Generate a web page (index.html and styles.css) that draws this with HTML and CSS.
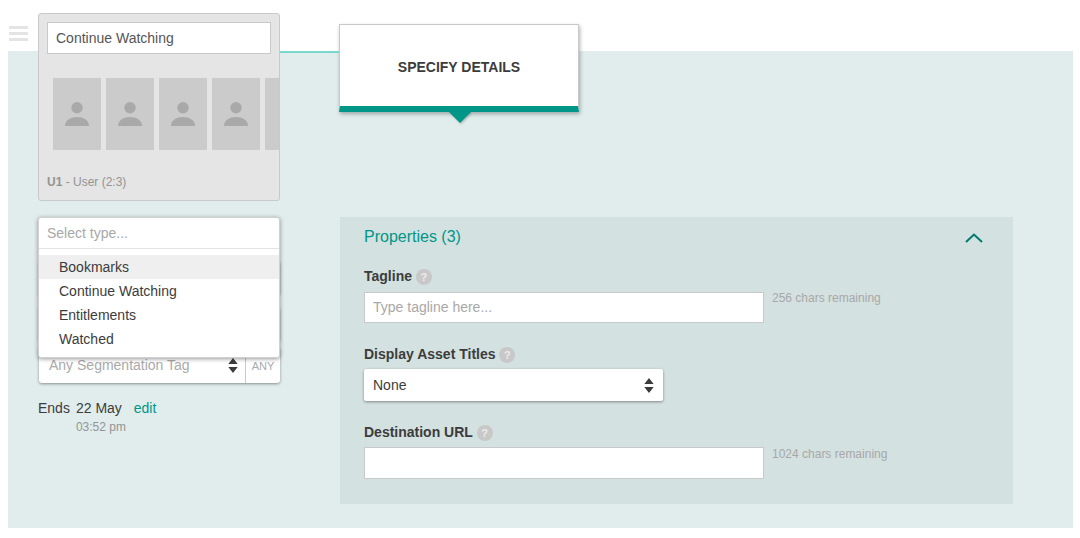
FILE: index.html
```html
<!DOCTYPE html>
<html lang="en">
<head>
<meta charset="utf-8">
<title>Specify Details</title>
<link rel="stylesheet" href="styles.css">
</head>
<body>
<header class="topbar">
  <div class="burger"><span></span><span></span><span></span></div>
</header>
<main class="stage">
  <aside class="side">
    <section class="card">
      <div class="card-title">Continue Watching</div>
      <div class="thumbs">
        <div class="thumb"><svg viewBox="0 0 24 24" class="person"><circle cx="12" cy="5.7" r="5.7"/><path d="M0 24c0-6 6-9 12-9s12 3 12 9z"/></svg></div>
        <div class="thumb"><svg viewBox="0 0 24 24" class="person"><circle cx="12" cy="5.7" r="5.7"/><path d="M0 24c0-6 6-9 12-9s12 3 12 9z"/></svg></div>
        <div class="thumb"><svg viewBox="0 0 24 24" class="person"><circle cx="12" cy="5.7" r="5.7"/><path d="M0 24c0-6 6-9 12-9s12 3 12 9z"/></svg></div>
        <div class="thumb"><svg viewBox="0 0 24 24" class="person"><circle cx="12" cy="5.7" r="5.7"/><path d="M0 24c0-6 6-9 12-9s12 3 12 9z"/></svg></div>
        <div class="thumb"></div>
      </div>
      <div class="card-caption"><b>U1</b> - User (2:3)</div>
    </section>
    <div class="filters">
      <div class="hidden-field first"></div>
      <div class="hidden-field second"></div>
      <div class="tag-select">
        <span class="tag-name">Any Segmentation Tag</span>
        <svg class="updown" viewBox="0 0 10 16"><path d="M5 0l5 6.5H0zM5 16L0 9.5h10z"/></svg>
        <span class="tag-any">ANY</span>
      </div>
      <div class="menu">
        <div class="menu-search">Select type...</div>
        <ul class="menu-list">
          <li class="active">Bookmarks</li>
          <li>Continue Watching</li>
          <li>Entitlements</li>
          <li>Watched</li>
        </ul>
      </div>
    </div>
    <div class="ends">
      <span class="ends-label">Ends</span>
      <div>
        <div>22 May <a class="edit">edit</a></div>
        <div class="ends-time">03:52 pm</div>
      </div>
    </div>
  </aside>
  <div class="content">
    <div class="tab">
      <div class="tab-label">SPECIFY DETAILS</div>
    </div>
    <section class="panel">
      <div class="panel-head">
        <h2>Properties (3)</h2>
        <svg class="chev" viewBox="0 0 18 10"><path d="M1 9l8-7.5L17 9"/></svg>
      </div>
      <div class="field tagline">
        <label>Tagline <i class="help">?</i></label>
        <div class="row">
          <div class="input placeholder">Type tagline here...</div>
          <span class="remain">256 chars remaining</span>
        </div>
      </div>
      <div class="field titles">
        <label>Display Asset Titles <i class="help">?</i></label>
        <div class="select">None<svg class="updown" viewBox="0 0 10 16"><path d="M5 0l5 6.5H0zM5 16L0 9.5h10z"/></svg></div>
      </div>
      <div class="field url">
        <label>Destination URL <i class="help">?</i></label>
        <div class="row">
          <div class="input"></div>
          <span class="remain">1024 chars remaining</span>
        </div>
      </div>
    </section>
  </div>
</main>
</body>
</html>
```
FILE: styles.css
```css
* { box-sizing: border-box; }
html, body { margin: 0; padding: 0; background: #fff; }
body {
  width: 1080px;
  height: 538px;
  padding: 0 7px 10px 8px;
  overflow: hidden;
  font-family: "Liberation Sans", Arial, sans-serif;
  font-size: 14px;
  color: #3c3c3c;
}
.topbar { height: 51px; padding: 26px 0 0 1px; }
.burger { width: 19px; display: flex; flex-direction: column; gap: 3px; }
.burger span { display: block; height: 3px; background: #e4e4e4; }
.stage {
  height: 477px;
  background: #e0edec;
  display: flex;
  padding-left: 30px;
}
.side { width: 242px; margin-top: -38px; flex: none; position: relative; }
.card {
  height: 188px;
  background: #e5e5e5;
  border: 1px solid #c9c9c9;
  border-radius: 3px;
  padding: 8px 8px 0;
  overflow: hidden;
}
.card-title {
  height: 32px;
  background: #fff;
  border: 1px solid #c9c9c9;
  padding-left: 8px;
  line-height: 30px;
  color: #555;
}
.thumbs { display: flex; gap: 5px; margin: 24px -9px 0 6px; }
.thumb {
  width: 48px;
  height: 72px;
  flex: none;
  background: #cbcbcb;
  display: flex;
  align-items: center;
  justify-content: center;
}
.person { width: 24px; height: 24px; fill: #a9a9a9; }
.card-caption { margin-top: 25px; font-size: 12px; color: #949494; }
.filters { position: relative; height: 166px; margin-top: 16px; }
.hidden-field {
  position: absolute;
  left: 1px;
  right: 0;
  height: 34px;
  background: #fff;
  border-radius: 3px;
  box-shadow: 0 1px 3px rgba(0,0,0,.35);
}
.hidden-field.first { top: 44px; }
.hidden-field.second { top: 90px; }
.tag-select {
  position: absolute;
  left: 1px;
  right: 0;
  top: 130px;
  height: 36px;
  display: flex;
  align-items: center;
  background: #fff;
  border-radius: 3px;
  box-shadow: 0 1px 3px rgba(0,0,0,.4);
  color: #aaa;
}
.tag-name { padding-left: 10px; flex: 1; }
.tag-select .updown { margin-right: 7px; }
.tag-any {
  width: 35px;
  height: 100%;
  border-left: 1px solid #c9c9c9;
  text-align: center;
  font-size: 11px;
  line-height: 38px;
}
.updown { width: 10px; height: 15px; fill: #3c3c3c; flex: none; }
.menu {
  position: absolute;
  left: 0;
  right: 0;
  top: 0;
  height: 141px;
  background: #fff;
  border: 1px solid #d0d0d0;
  border-radius: 3px;
  box-shadow: 0 1px 4px rgba(0,0,0,.4);
}
.menu-search {
  height: 31px;
  padding-left: 8px;
  line-height: 30px;
  color: #a8a8a8;
  border-bottom: 1px solid #e2e2e2;
}
.menu-list { list-style: none; margin: 6px 0 0; padding: 0; }
.menu-list li { height: 24px; line-height: 24px; padding-left: 20px; }
.menu-list li.active { background: #efefef; }
.ends { display: flex; gap: 6px; margin-top: 17px; }
.ends > div { line-height: 17px; }
.ends-label { line-height: 17px; }
.edit { color: #009688; margin-left: 8px; }
.ends-time { font-size: 12px; color: #949494; margin-top: 2px; }
.content { margin-left: 59px; flex: 1; }
.tab {
  width: 240px;
  height: 88px;
  margin-top: -27px;
  background: #fff;
  border: 1px solid #c9c9c9;
  border-bottom: 6px solid #009688;
  box-shadow: 1px 2px 4px rgba(0,0,0,.3);
  position: relative;
}
.tab::before {
  content: "";
  position: absolute;
  left: -60px;
  top: 26px;
  width: 59px;
  height: 2px;
  background: #7ad8cc;
}
.tab::after {
  content: "";
  position: absolute;
  left: 109px;
  bottom: -17px;
  border: 11px solid transparent;
  border-bottom: 0;
  border-top-color: #009688;
  filter: drop-shadow(1px 1px 1px rgba(0,0,0,.25));
}
.tab-label {
  text-align: center;
  font-weight: 700;
  font-size: 14px;
  line-height: 84px;
  padding-bottom: 2px;
}
.panel {
  width: 673px;
  height: 287px;
  margin: 105px 0 0 1px;
  background: #d3e1e0;
  padding: 0 24px;
}
.panel-head { height: 39px; display: flex; align-items: center; justify-content: space-between; padding-right: 6px; margin-bottom: 10px; }
h2 { margin: 0; font-size: 16px; font-weight: 400; color: #009688; }
.chev { width: 18px; height: 10px; margin-top: 3px; fill: none; stroke: #00796e; stroke-width: 2; }
label { display: block; font-weight: 700; font-size: 14px; height: 20px; line-height: 20px; }
.help {
  display: inline-block;
  width: 16px;
  height: 16px;
  border-radius: 50%;
  background: #c8c8c8;
  color: #ececec;
  font-style: normal;
  font-weight: 700;
  font-size: 11px;
  line-height: 16px;
  text-align: center;
  vertical-align: 0;
}
.row { display: flex; align-items: flex-start; gap: 8px; margin-top: 5px; }
.input {
  width: 400px;
  height: 32px;
  background: #fff;
  border: 1px solid #c9c9c9;
  padding-left: 8px;
  line-height: 30px;
}
.tagline .row { margin-top: 6px; }
.tagline .input { height: 31px; line-height: 29px; }
.placeholder { color: #a8a8a8; }
.remain { font-size: 12px; color: #a8a8a8; line-height: 12px; }
.url .remain { padding-top: 1px; }
.field.titles { margin-top: 21px; }
.field.url { margin-top: 21px; }
.select {
  width: 299px;
  height: 32px;
  margin-top: 5px;
  background: #fff;
  border-radius: 2px;
  box-shadow: 0 1px 3px rgba(0,0,0,.4);
  padding: 0 9px;
  display: flex;
  align-items: center;
  justify-content: space-between;
}
```
